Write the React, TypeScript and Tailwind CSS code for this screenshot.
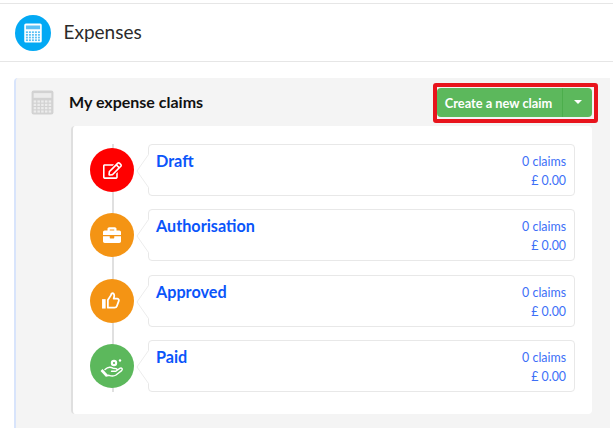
import React from "react";
import { FaRegEdit, FaBriefcase } from "react-icons/fa";

function Calc({ body, cell, size }: { body: string; cell: string; size: number }) {
  const cells = [];
  for (let r = 0; r < 4; r++) for (let c = 0; c < 5; c++) cells.push(<rect key={`${r}${c}`} x={3.5 + c * 3.6} y={10 + r * 3.2} width={2.4} height={2.1} fill={cell} />);
  return (
    <svg width={size} height={size} viewBox="0 0 24 24">
      <rect x="1.5" y="0.5" width="21" height="23" rx="2" fill={body} />
      <rect x="3.5" y="3" width="17" height="4.5" fill={cell} />
      {cells}
    </svg>
  );
}

function Thumb() {
  return (
    <svg width="18" height="17" viewBox="0 0 20 19" fill="none" className="ml-[-2px]">
      <rect x="0" y="8" width="4" height="10.5" fill="white" />
      <path d="M6.5 9 L10 3.5 Q10.5 1 12.5 1.5 Q14.5 2.5 13 7.5 L17 7.5 Q19.5 8 18.5 10.5 L16.5 16 Q16 17.5 14 17.5 L6.5 17.5 Z" stroke="white" strokeWidth="2" strokeLinejoin="round" />
    </svg>
  );
}

function Hand() {
  return (
    <svg width="24" height="18" viewBox="0 0 24 18" fill="none" className="mt-[5px]">
      <circle cx="14" cy="4" r="3.2" fill="white" />
      <circle cx="14" cy="4" r="1.1" fill="#5cb85c" />
      <circle cx="20" cy="1.5" r="1.2" fill="white" />
      <path d="M5 10.5 C8 7.5 11 8 13 9.2 L16 9.6 C17.8 10 17.2 12.4 15 12.3 L11.5 12.2 M15.8 12.2 L19.8 9.4 C21.6 8.3 23 10 21.6 11.6 L16 16 C14.4 17 11 17 9 16.3 L7 16.8" stroke="white" strokeWidth="1.4" strokeLinecap="round" strokeLinejoin="round" />
      <path d="M1.5 11 L7 17" stroke="white" strokeWidth="2.6" />
    </svg>
  );
}

const rows = [
  { name: "Draft", bg: "bg-[#ff0000]", icon: <FaRegEdit size={19} /> },
  { name: "Authorisation", bg: "bg-[#f49414]", icon: <FaBriefcase size={18} /> },
  { name: "Approved", bg: "bg-[#f49414]", icon: <Thumb /> },
  { name: "Paid", bg: "bg-[#5cb85c]", icon: <Hand /> },
];

function Row({ name, bg, icon }: { name: string; bg: string; icon: React.ReactNode }) {
  return (
    <div className="flex h-[52px] items-center">
      <div className="w-[17px] shrink-0" />
      <div className={`relative z-10 flex h-[44px] w-[44px] shrink-0 items-center justify-center rounded-full text-white ${bg}`}>{icon}</div>
      <div className="relative ml-[14px] flex h-[52px] flex-1 justify-between rounded border border-[#e8e8e8] bg-white pl-[7px] pr-[8px]">
        <svg width="14" height="34" viewBox="0 0 14 34" className="absolute left-[-13px] top-[9px]">
          <path d="M13 0 L1 17 L13 34 Z" fill="white" />
          <path d="M12.5 0.5 L1 17 L12.5 33.5" fill="none" stroke="#ececec" strokeWidth="1" />
        </svg>
        <div className="relative pt-[4px] text-[16.2px] leading-[24px] font-bold text-[#0a55fa]">{name}</div>
        <div className="pt-[7px] text-right text-[12.4px] leading-[19px] text-[#3d6ff7]">
          <div>0 claims</div>
          <div>£ 0.00</div>
        </div>
      </div>
    </div>
  );
}

export default function App() {
  return (
    <div className="h-[428px] w-[613px] overflow-hidden bg-white pt-[3px] font-['Lato','Carlito',sans-serif] text-[#222]">
      <header className="flex h-[59px] items-center border-y border-[#e6e6e6] pl-[15px]">
        <div className="flex h-[36px] w-[36px] items-center justify-center rounded-full bg-[#03a9f4]">
          <Calc body="#ffffff" cell="#5cc0f5" size={20} />
        </div>
        <span className="ml-[12.5px] text-[19px] text-[#2b2b2b]">Expenses</span>
      </header>
      <section className="ml-[14px] mr-[3px] mt-[16px] h-[400px] rounded-tl border-l-2 border-[#d8e4fb] bg-[#f4f4f4]">
        <div className="relative flex h-[48px] items-center pl-[14px] pr-[18px]">
          <Calc body="#d2d2d2" cell="#ececec" size={25} />
          <h2 className="ml-[14px] flex-1 text-[16px] font-bold text-[#111]">My expense claims</h2>
          <div className="flex h-[29px] w-[155px] items-center rounded-sm bg-[#5cb85c] text-white">
            <div className="flex h-full flex-1 items-center justify-center pr-[2px] pt-[3px] text-[12.8px] font-bold">Create a new claim</div>
            <div className="flex h-full w-[30px] items-center justify-center border-l border-[#4cae4c]">
              <div className="h-0 w-0 border-x-[4px] border-t-[4px] border-x-transparent border-t-white" />
            </div>
          </div>
          <div className="absolute right-[12px] top-[5px] h-[40px] w-[165px] rounded-[3px] border-[4px] border-[#e8141c]" />
        </div>
        <div className="ml-[55px] mr-[18px] h-[288px] rounded-sm border-l-2 border-[#dfdfdf] bg-white pb-[22px] pl-0 pr-[17px] pt-[18px]">
          <div className="relative flex flex-col gap-[13.3px]">
            <div className="absolute bottom-0 left-[39px] top-0 w-[2px] bg-[#e0e0e0]" />
            {rows.map((r) => (
              <Row key={r.name} {...r} />
            ))}
          </div>
        </div>
      </section>
    </div>
  );
}
